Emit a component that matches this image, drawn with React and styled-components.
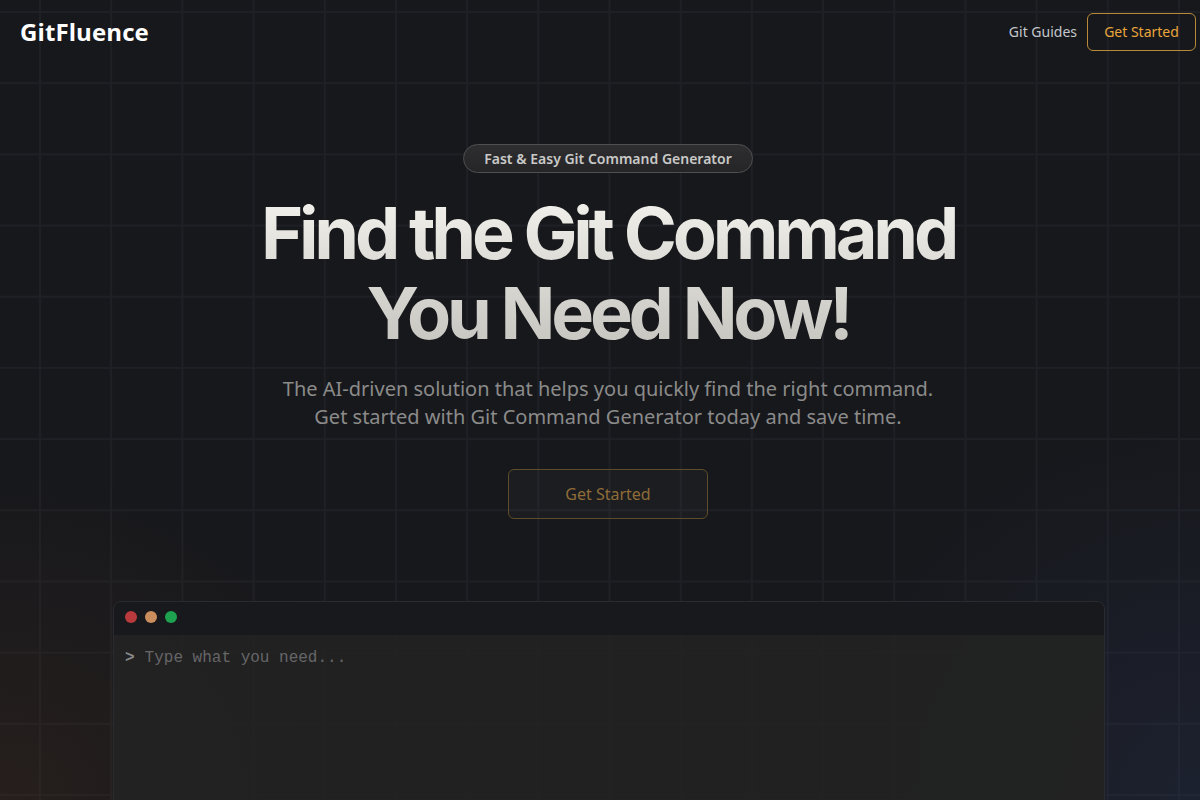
import styled, { createGlobalStyle } from "styled-components";

const GlobalStyle = createGlobalStyle`
  * { box-sizing: border-box; }
  html, body { margin: 0; padding: 0; background: #17181c; }
  body { font-family: "Noto Sans", "Open Sans", sans-serif; }
`;

export default function App() {
  return (
    <>
      <GlobalStyle />
      <Page>
        <Nav>
          <Logo>GitFluence</Logo>
          <NavLinks>
            <NavLink>Git Guides</NavLink>
            <NavButton>Get Started</NavButton>
          </NavLinks>
        </Nav>
        <Hero>
          <Badge>Fast &amp; Easy Git Command Generator</Badge>
          <Title>
            Find the Git Command
            <br />
            You Need Now!
          </Title>
          <Subtitle>
            The AI-driven solution that helps you quickly find the right command.
            <br />
            Get started with Git Command Generator today and save time.
          </Subtitle>
          <CtaButton>Get Started</CtaButton>
        </Hero>
        <TerminalWrap>
          <Terminal>
            <TitleBar>
              <Dot color="#b83a3c" />
              <Dot color="#c98e5c" />
              <Dot color="#1ea24f" />
            </TitleBar>
            <TermBody>
              <Prompt>&gt;</Prompt>
              <TermInput placeholder="Type what you need..." />
            </TermBody>
          </Terminal>
        </TerminalWrap>
      </Page>
    </>
  );
}

const Page = styled.div`
  position: relative;
  height: 800px;
  overflow: hidden;
  background-color: #17181c;
  background-image:
    radial-gradient(ellipse 520px 460px at 0% 100%, rgba(70, 45, 30, 0.32), transparent 72%),
    radial-gradient(ellipse 520px 520px at 100% 100%, rgba(40, 52, 85, 0.34), transparent 72%),
    linear-gradient(to right, #1f2025 2px, transparent 2px),
    linear-gradient(to bottom, #1f2025 2px, transparent 2px);
  background-size: 100% 100%, 100% 100%, 71.2px 71.2px, 71.2px 71.2px;
  background-position: 0 0, 0 0, 39px 0, 0 11px;
`;

const Nav = styled.nav`
  display: flex;
  align-items: center;
  justify-content: space-between;
  height: 63px;
  padding: 0 4px 0 20px;
`;

const Logo = styled.div`
  font-family: "Open Sans", "Noto Sans", sans-serif;
  font-weight: 700;
  font-size: 24px;
  color: #ffffff;
  letter-spacing: 0.1px;
`;

const NavLinks = styled.div`
  display: flex;
  align-items: center;
  gap: 10px;
`;

const NavLink = styled.a`
  font-size: 14px;
  color: #c3c7cb;
  cursor: pointer;
`;

const NavButton = styled.button`
  height: 38px;
  width: 109px;
  border: 1px solid #b9893a;
  border-radius: 6px;
  background: transparent;
  color: #eaa53b;
  font-family: "Noto Sans", sans-serif;
  font-size: 14px;
  cursor: pointer;
`;

const Hero = styled.section`
  display: flex;
  flex-direction: column;
  align-items: center;
  padding: 81px 0 0 16px;
`;

const Badge = styled.div`
  height: 29px;
  padding: 0 20px;
  display: flex;
  align-items: center;
  border-radius: 999px;
  border: 1px solid #4f4f52;
  background: linear-gradient(180deg, #2e2e31, #252528);
  color: #c9c9c7;
  font-size: 14px;
  font-weight: 600;
`;

const Title = styled.h1`
  margin: 20px 0 0;
  font-family: Inter, "Liberation Sans", sans-serif;
  font-weight: 700;
  font-size: 72px;
  line-height: 80px;
  letter-spacing: -4.2px;
  text-align: center;
  background: linear-gradient(180deg, #f3f2ec 0%, #d9d7d1 55%, #c6c4be 100%);
  -webkit-background-clip: text;
  background-clip: text;
  color: transparent;
`;

const Subtitle = styled.p`
  margin: 22px 0 0;
  font-size: 20px;
  line-height: 28px;
  color: #8b8b8a;
  text-align: center;
`;

const CtaButton = styled.button`
  margin-top: 38px;
  width: 200px;
  height: 50px;
  border: 1px solid #5f4c28;
  border-radius: 6px;
  background: rgba(255, 255, 255, 0.025);
  color: #8f6c37;
  font-family: "Noto Sans", sans-serif;
  font-size: 16px;
  cursor: pointer;
`;

const TerminalWrap = styled.div`
  display: flex;
  padding-left: 113px;
  margin-top: 82px;
`;

const Terminal = styled.div`
  width: 992px;
  height: 260px;
  border: 1px solid #2a2b30;
  border-radius: 8px;
  overflow: hidden;
  background: rgba(34, 34, 34, 0.93);
`;

const TitleBar = styled.div`
  height: 33px;
  display: flex;
  align-items: center;
  gap: 8px;
  padding: 0 0 3px 11px;
  background: #18191d;
`;

const Dot = styled.span`
  width: 12px;
  height: 12px;
  border-radius: 50%;
  background: ${(p) => p.color};
`;

const TermBody = styled.div`
  display: flex;
  align-items: center;
  gap: 10px;
  padding: 14px 11px 12px;
  font-family: "Liberation Mono", "DejaVu Sans Mono", monospace;
  font-size: 16px;
`;

const Prompt = styled.span`
  color: #8a8a8a;
  font-weight: 700;
`;

const TermInput = styled.input`
  flex: 1;
  border: none;
  outline: none;
  background: transparent;
  color: #cfcfcf;
  font-family: inherit;
  font-size: 16px;
  padding: 0;
  &::placeholder {
    color: #666668;
  }
`;
